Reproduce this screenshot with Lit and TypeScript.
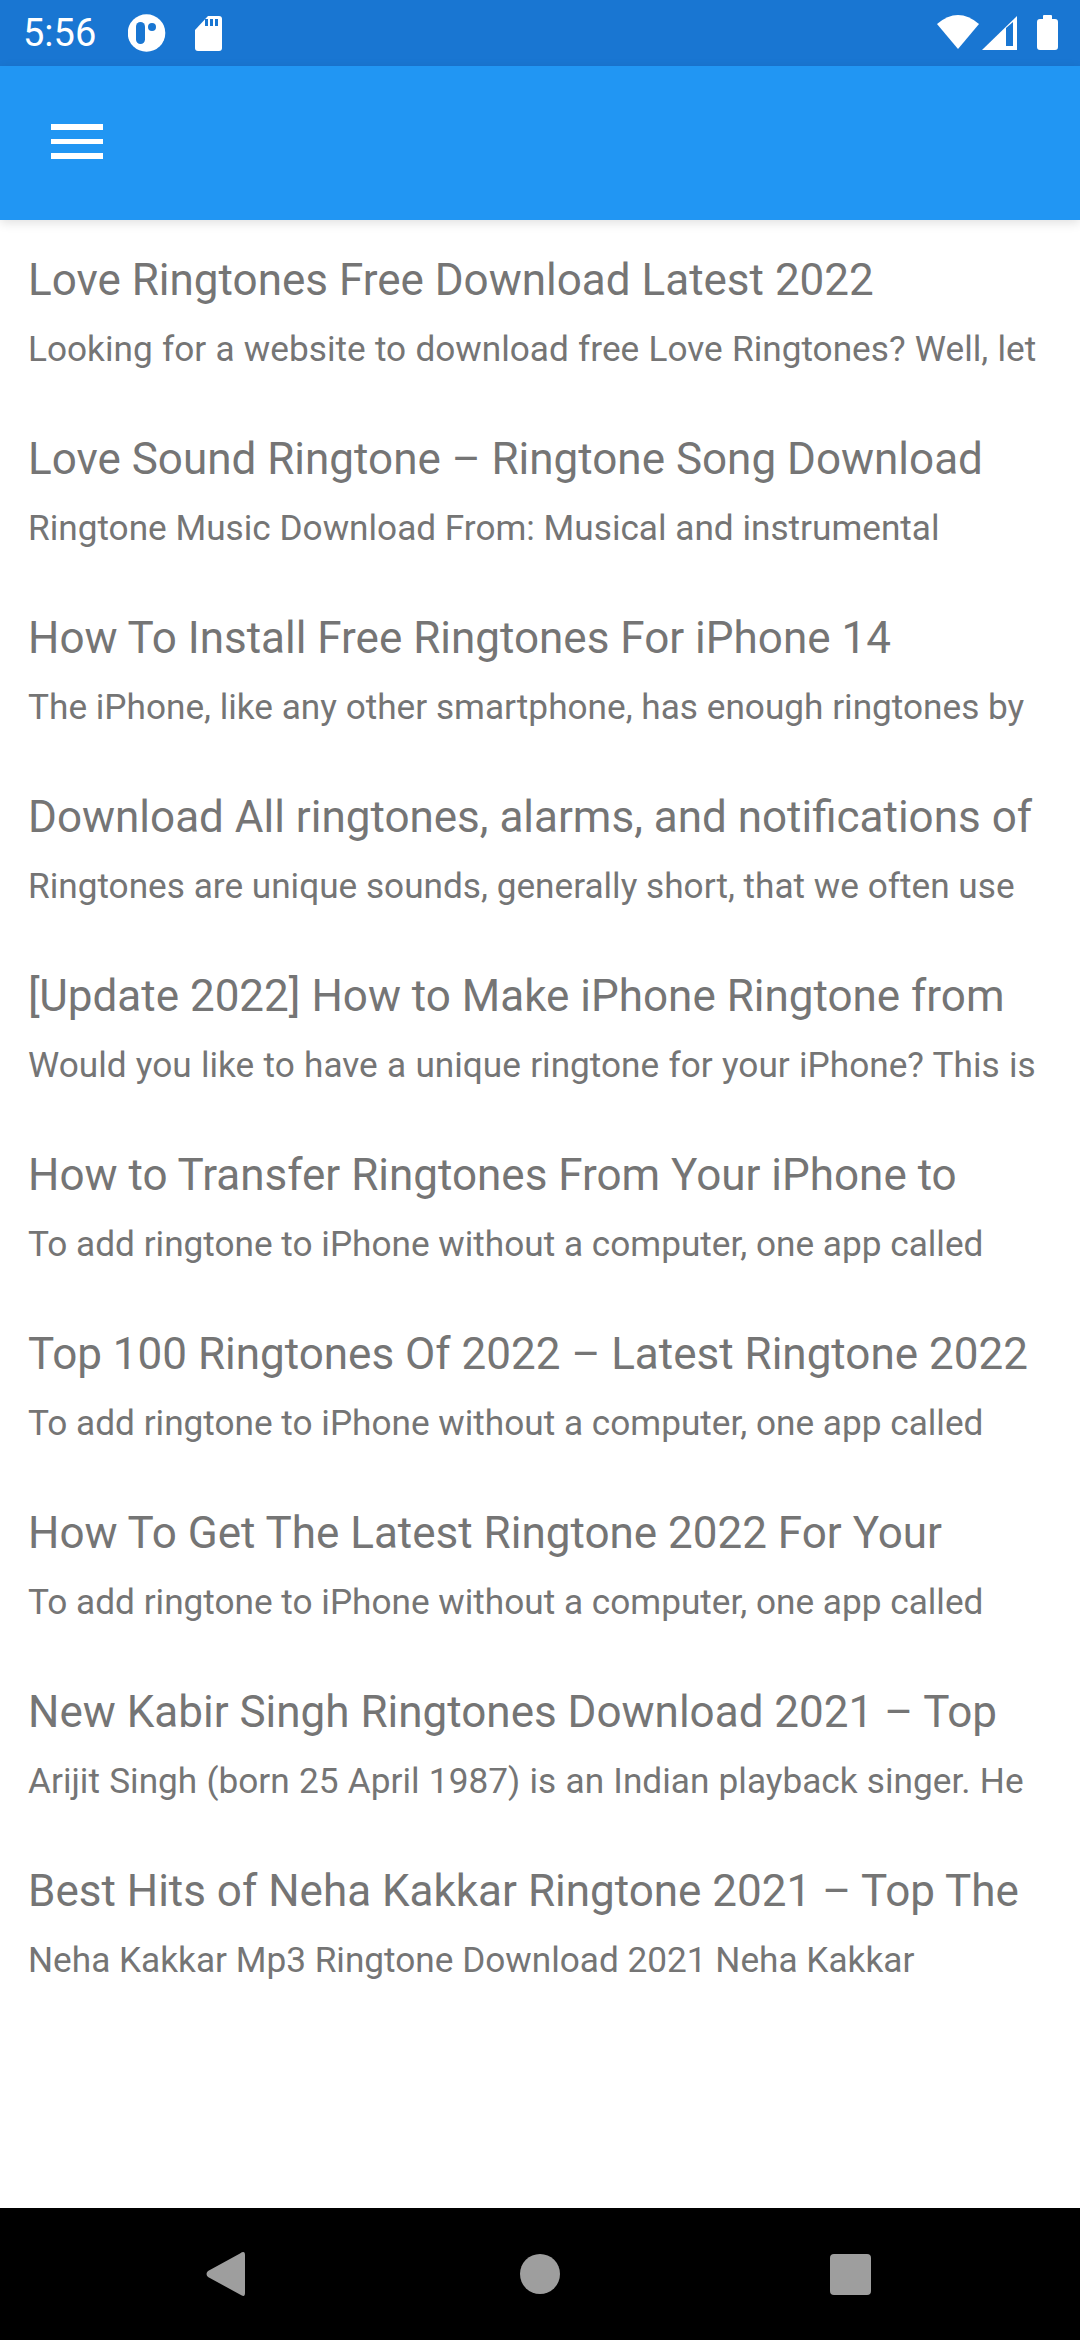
import { css, html, LitElement } from "lit";
import { customElement } from "lit/decorators.js";

const posts = [
  ["Love Ringtones Free Download Latest 2022", "Looking for a website to download free Love Ringtones? Well, let"],
  ["Love Sound Ringtone – Ringtone Song Download", "Ringtone Music Download From: Musical and instrumental"],
  ["How To Install Free Ringtones For iPhone 14", "The iPhone, like any other smartphone, has enough ringtones by"],
  ["Download All ringtones, alarms, and notifications of", "Ringtones are unique sounds, generally short, that we often use"],
  ["[Update 2022] How to Make iPhone Ringtone from", "Would you like to have a unique ringtone for your iPhone? This is"],
  ["How to Transfer Ringtones From Your iPhone to", "To add ringtone to iPhone without a computer, one app called"],
  ["Top 100 Ringtones Of 2022 – Latest Ringtone 2022", "To add ringtone to iPhone without a computer, one app called"],
  ["How To Get The Latest Ringtone 2022 For Your", "To add ringtone to iPhone without a computer, one app called"],
  ["New Kabir Singh Ringtones Download 2021 – Top", "Arijit Singh (born 25 April 1987) is an Indian playback singer. He"],
  ["Best Hits of Neha Kakkar Ringtone 2021 – Top The", "Neha Kakkar Mp3 Ringtone Download 2021 Neha Kakkar"],
];

@customElement("app-root")
export default class AppRoot extends LitElement {
  static styles = css`
    :host {
      display: flex;
      flex-direction: column;
      width: 1080px;
      height: 2340px;
      background: #fff;
      font-family: Roboto, sans-serif;
      overflow: hidden;
    }

    .status {
      height: 66px;
      flex: none;
      display: flex;
      align-items: center;
      background: #1976d2;
      color: #fff;
      padding: 0 22px 0 23px;
    }

    .time {
      font-size: 38px;
      line-height: 66px;
      width: 105px;
    }

    .status svg {
      display: block;
      flex: none;
      height: 66px;
    }

    .sd {
      margin-left: 29px;
    }

    .wifi {
      margin-left: auto;
    }

    .signal {
      margin-left: 3px;
    }

    .battery {
      margin-left: 20px;
    }

    .appbar {
      height: 154px;
      flex: none;
      display: flex;
      align-items: center;
      padding: 0 0 3px 51px;
      box-sizing: border-box;
      background: #2196f3;
      box-shadow: 0 3px 10px rgba(0, 0, 0, 0.12);
      position: relative;
    }

    .menu {
      display: flex;
      flex-direction: column;
      gap: 9px;
      width: 52px;
    }

    .menu span {
      height: 5.5px;
      background: #fff;
    }

    .list {
      flex: 1;
      padding: 32px 28px 0;
      color: #757575;
    }

    .item {
      height: 179px;
      white-space: nowrap;
    }

    .title {
      font-size: 44px;
      line-height: 56px;
    }

    .sub {
      font-size: 35.2px;
      line-height: 44px;
      margin-top: 19px;
    }

    /* lines with a sentence break run a little wider in the reference */
    .sub.wide {
      word-spacing: 0.55px;
    }

    .nav {
      height: 132px;
      flex: none;
      background: #000;
    }

    .nav svg {
      display: block;
      width: 1080px;
      height: 132px;
    }
  `;

  render() {
    return html`
      <div class="status">
        <span class="time">5:56</span>
        <svg width="38" viewBox="128 0 38 66">
          <circle cx="146.5" cy="33" r="18.8" fill="#fff"></circle>
          <rect x="136" y="22" width="9" height="22" rx="4.5" fill="#1976d2"></rect>
          <circle cx="152" cy="27" r="4" fill="#1976d2"></circle>
        </svg>
        <svg class="sd" width="27" viewBox="194 0 27 66">
          <path d="M207 16H218a3 3 0 0 1 3 3V48a3 3 0 0 1-3 3H197a3 3 0 0 1-3-3V30Z" fill="#fff"></path>
          <path d="M204 19h3v7h-3ZM209 19h3v7h-3ZM214 19h3v7h-3Z" fill="#1976d2"></path>
        </svg>
        <svg class="wifi" width="42" viewBox="937 0 42 66">
          <path d="M937 24Q958 6 979 24L958 49Z" fill="#fff"></path>
        </svg>
        <svg class="signal" width="35" viewBox="982 0 35 66">
          <path d="M982 50L1017 16V50Z" fill="#fff"></path>
          <path d="M1006 46V28L1013 22V46Z" fill="#1976d2"></path>
        </svg>
        <svg class="battery" width="21" viewBox="1037 0 21 66">
          <path d="M1043 19V16a1 1 0 0 1 1-1H1051a1 1 0 0 1 1 1V19H1055a3 3 0 0 1 3 3V47a3 3 0 0 1-3 3H1040a3 3 0 0 1-3-3V22a3 3 0 0 1 3-3Z" fill="#fff"></path>
        </svg>
      </div>
      <div class="appbar">
        <div class="menu"><span></span><span></span><span></span></div>
      </div>
      <div class="list">
        ${posts.map(
          ([title, sub]) => html`
            <div class="item">
              <div class="title">${title}</div>
              <div class="sub ${/[.?] /.test(sub) ? "wide" : ""}">${sub}</div>
            </div>
          `
        )}
      </div>
      <div class="nav">
        <svg viewBox="0 0 1080 132">
          <path d="M240 45.5Q245 42 245 47V85Q245 90 240 86.5L208 69Q205 66 208 63Z" fill="#9e9e9e"></path>
          <circle cx="540" cy="66" r="20" fill="#9e9e9e"></circle>
          <rect x="830" y="46" width="41" height="41" rx="4" fill="#9e9e9e"></rect>
        </svg>
      </div>
    `;
  }
}
